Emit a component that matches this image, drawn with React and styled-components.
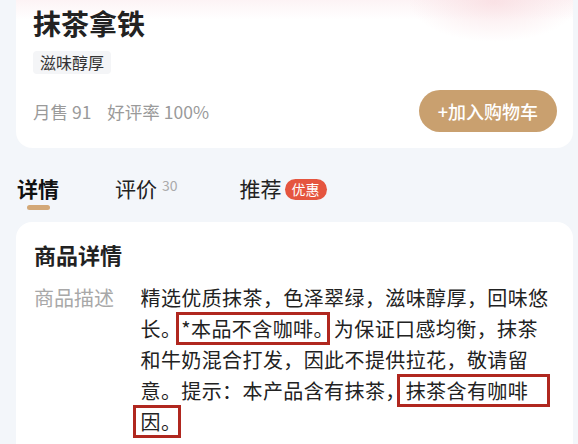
import styled, { createGlobalStyle } from 'styled-components';

const GlobalStyle = createGlobalStyle`
  html, body {
    margin: 0;
    padding: 0;
    overflow: hidden;
    background: #f3f6fa;
  }
  body {
    font-family: "Noto Sans CJK SC", "Noto Sans", sans-serif;
    color: #222;
  }
`;

const tabs = [
  { label: '详情', active: true },
  { label: '评价', count: 30 },
  { label: '推荐', badge: '优惠' },
];

const App = () => {
  return (
    <Page>
      <GlobalStyle />
      <InfoCard>
        <Title>抹茶拿铁</Title>
        <Tag>滋味醇厚</Tag>
        <BottomRow>
          <Stats>
            <Stat>月售 91</Stat>
            <Stat>好评率 100%</Stat>
          </Stats>
          <CartButton>+加入购物车</CartButton>
        </BottomRow>
      </InfoCard>

      <TabBar>
        {tabs.map((t) => (
          <Tab key={t.label}>
            <TabHead>
              <TabLabel $active={t.active}>{t.label}</TabLabel>
              {t.count && <Count>{t.count}</Count>}
              {t.badge && <Badge>{t.badge}</Badge>}
            </TabHead>
            <Indicator $active={t.active} />
          </Tab>
        ))}
      </TabBar>

      <DetailCard>
        <DetailTitle>商品详情</DetailTitle>
        <DetailRow>
          <DetailLabel>商品描述</DetailLabel>
          <DetailText>
            精选优质抹茶，色泽翠绿，滋味醇厚，回味悠长。
            <Mark $lead={5} $cut={4}>*本品不含咖啡。</Mark>
            为保证口感均衡，抹茶和牛奶混合打发，因此不提供拉花，敬请留意。提示：本产品含有抹茶，
            <Mark $lead={9} $trail={22}>抹茶含有咖啡</Mark>
            <Mark $lead={8}>因。</Mark>
          </DetailText>
        </DetailRow>
      </DetailCard>
    </Page>
  );
};

const Page = styled.div`
  padding: 0 5px 0 16px;
`;

const InfoCard = styled.div`
  background:
    radial-gradient(ellipse 85px 40px at 478px 2px, rgba(247, 210, 215, 0.55), rgba(255, 255, 255, 0)),
    linear-gradient(to bottom, rgba(251, 232, 235, 0.5), rgba(255, 255, 255, 0) 20px),
    #fff;
  border-radius: 0 0 16px 16px;
  padding: 3px 16px 16px 17px;
`;

const Title = styled.h1`
  margin: 0;
  font-size: 28px;
  font-weight: 700;
  line-height: 40px;
  color: #222;
`;

const Tag = styled.span`
  display: inline-block;
  margin-top: 8px;
  padding: 0 7px;
  height: 23px;
  line-height: 23px;
  font-size: 16px;
  background: #f4f5f7;
  border-radius: 4px;
  color: #333;
`;

const BottomRow = styled.div`
  display: flex;
  justify-content: space-between;
  align-items: center;
  margin-top: 16px;
`;

const Stats = styled.div`
  display: flex;
  gap: 16px;
  font-size: 17.5px;
  color: #9a9a9a;
`;

const Stat = styled.span``;

const CartButton = styled.button`
  height: 42px;
  padding: 0 19px;
  border: none;
  border-radius: 21px;
  background: #c9a06f;
  color: #fff;
  font-family: inherit;
  font-size: 18px;
  font-weight: 500;
`;

const TabBar = styled.div`
  display: flex;
  align-items: flex-start;
  gap: 56px;
  padding: 26px 0 0 1px;
  margin-bottom: 12px;
`;

const Tab = styled.div`
  display: flex;
  flex-direction: column;
  align-items: center;
`;

const TabHead = styled.div`
  display: flex;
  align-items: flex-start;
`;

const TabLabel = styled.span`
  font-size: 21px;
  line-height: 28px;
  font-weight: ${(p) => (p.$active ? 600 : 400)};
  color: ${(p) => (p.$active ? '#111' : '#222')};
`;

const Count = styled.span`
  margin: 3px 6px 0 5px;
  font-size: 14px;
  line-height: 16px;
  color: #aaa;
`;

const Badge = styled.span`
  margin: 5px 0 0 3px;
  padding: 0 7px;
  height: 21px;
  line-height: 21px;
  border-radius: 11px;
  background: #e5553f;
  color: #fff;
  font-size: 14px;
`;

const Indicator = styled.div`
  margin-top: 3px;
  width: 23px;
  height: 5px;
  border-radius: 3px;
  background: ${(p) => (p.$active ? '#d3a877' : 'transparent')};
`;

const DetailCard = styled.div`
  background: #fff;
  border-radius: 16px 16px 0 0;
  padding: 17px 19px 60px 18px;
`;

const DetailTitle = styled.h2`
  margin: 0;
  font-size: 22px;
  font-weight: 600;
  line-height: 30px;
  color: #222;
`;

const DetailRow = styled.div`
  display: flex;
  margin-top: 13px;
`;

const DetailLabel = styled.div`
  flex: none;
  width: 80px;
  margin-right: 26.5px;
  font-size: 20px;
  line-height: 31px;
  color: #a8a8a8;
`;

const DetailText = styled.p`
  flex: 1;
  margin: 0;
  font-size: 20px;
  line-height: 31px;
  letter-spacing: 0.4px;
  color: #222;
`;

/* red annotation frame around a phrase; $lead/$cut move its left/right edge */
const Mark = styled.span`
  position: relative;
  padding-right: ${(p) => p.$trail || 0}px;

  &::before {
    content: '';
    position: absolute;
    top: -2px;
    bottom: -2px;
    left: -${(p) => p.$lead || 0}px;
    right: ${(p) => p.$cut || 0}px;
    border: 3px solid #b0271f;
    pointer-events: none;
  }
`;

export default App;
